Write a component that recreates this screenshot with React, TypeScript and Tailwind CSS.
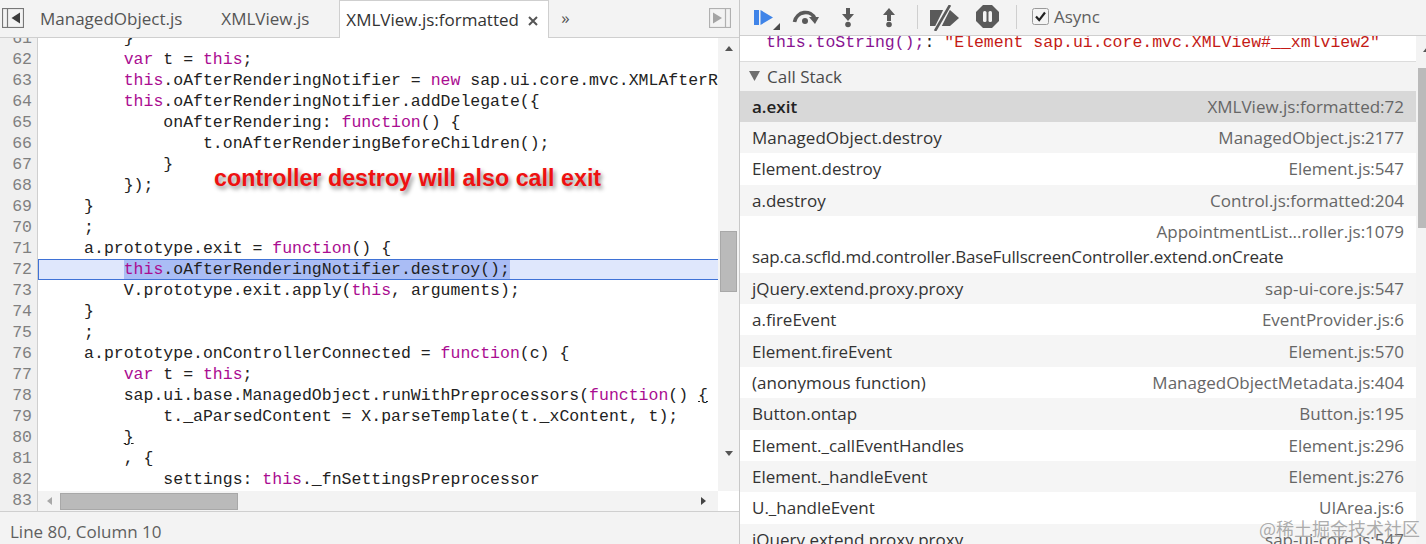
import type { ReactNode } from "react";

const UI_FONT = "font-['Open_Sans','Noto_Sans',sans-serif]";

const Kw = ({ children }: { children: ReactNode }) => <span className="text-[#aa0d91]">{children}</span>;

// colours this / var / new / function, leaves the rest alone
const hl = (src: string) =>
  src.split(/\b(this|var|new|function)\b/).map((part, i) => (i % 2 ? <Kw key={i}>{part}</Kw> : part));

const codeLines: { n: number; indent: number; body: ReactNode; active?: boolean }[] = [
  { n: 61, indent: 8, body: "}" },
  { n: 62, indent: 8, body: hl("var t = this;") },
  { n: 63, indent: 8, body: hl("this.oAfterRenderingNotifier = new sap.ui.core.mvc.XMLAfterRenderingNotifier();") },
  { n: 64, indent: 8, body: hl("this.oAfterRenderingNotifier.addDelegate({") },
  { n: 65, indent: 12, body: hl("onAfterRendering: function() {") },
  { n: 66, indent: 16, body: "t.onAfterRenderingBeforeChildren();" },
  { n: 67, indent: 12, body: "}" },
  { n: 68, indent: 8, body: "});" },
  { n: 69, indent: 4, body: "}" },
  { n: 70, indent: 4, body: ";" },
  { n: 71, indent: 4, body: hl("a.prototype.exit = function() {") },
  {
    n: 72,
    indent: 8,
    active: true,
    body: <span className="bg-[#aabdf5]">{hl("this.oAfterRenderingNotifier.destroy();")}</span>,
  },
  { n: 73, indent: 8, body: hl("V.prototype.exit.apply(this, arguments);") },
  { n: 74, indent: 4, body: "}" },
  { n: 75, indent: 4, body: ";" },
  { n: 76, indent: 4, body: hl("a.prototype.onControllerConnected = function(c) {") },
  { n: 77, indent: 8, body: hl("var t = this;") },
  {
    n: 78,
    indent: 8,
    body: (
      <>
        {hl("sap.ui.base.ManagedObject.runWithPreprocessors(function() ")}
        <span className="underline">{"{"}</span>
      </>
    ),
  },
  { n: 79, indent: 12, body: "t._aParsedContent = X.parseTemplate(t._xContent, t);" },
  { n: 80, indent: 8, body: <span className="underline">{"}"}</span> },
  { n: 81, indent: 8, body: ", {" },
  { n: 82, indent: 12, body: hl("settings: this._fnSettingsPreprocessor") },
  { n: 83, indent: 8, body: "}" },
];

const stack: { name: string; file: string; tall?: boolean }[] = [
  { name: "a.exit", file: "XMLView.js:formatted:72" },
  { name: "ManagedObject.destroy", file: "ManagedObject.js:2177" },
  { name: "Element.destroy", file: "Element.js:547" },
  { name: "a.destroy", file: "Control.js:formatted:204" },
  {
    name: "sap.ca.scfld.md.controller.BaseFullscreenController.extend.onCreate",
    file: "AppointmentList...roller.js:1079",
    tall: true,
  },
  { name: "jQuery.extend.proxy.proxy", file: "sap-ui-core.js:547" },
  { name: "a.fireEvent", file: "EventProvider.js:6" },
  { name: "Element.fireEvent", file: "Element.js:570" },
  { name: "(anonymous function)", file: "ManagedObjectMetadata.js:404" },
  { name: "Button.ontap", file: "Button.js:195" },
  { name: "Element._callEventHandles", file: "Element.js:296" },
  { name: "Element._handleEvent", file: "Element.js:276" },
  { name: "U._handleEvent", file: "UIArea.js:6" },
  { name: "jQuery.extend.proxy.proxy", file: "sap-ui-core.js:547" },
];

const PanelToggle = ({ flip }: { flip?: boolean }) => (
  <svg width="22" height="20" viewBox="0 0 22 20" className="shrink-0">
    <rect x="0.5" y="0.5" width="21" height="19" fill="#f3f3f3" stroke={flip ? "#b0b0b0" : "#777"} strokeWidth="1.2" />
    {flip ? (
      <>
        <path d="M16.5 1v18" stroke="#b0b0b0" strokeWidth="1.2" />
        <path d="M4 4.5l9 5.5-9 5.5z" fill="#a4a4a4" />
      </>
    ) : (
      <>
        <path d="M5.5 1v18" stroke="#777" strokeWidth="1.2" />
        <path d="M18 4.5L9.5 10l8.5 5.5z" fill="#3c3c3c" />
      </>
    )}
  </svg>
);

const DebugToolbar = () => (
  <div className="h-[36px] shrink-0 flex items-start bg-[#f3f3f3] border-b border-[#cfcfcf]">
    <svg width="28" height="22" viewBox="0 0 28 22" className="ml-[13px] mt-[9px] shrink-0">
      <path d="M1 1h5v15H1zM7.5 1L20 8.5 7.5 16z" fill="#3f84e8" />
      <path d="M27 14v7h-7z" fill="#4a4a4a" />
    </svg>
    <svg width="28" height="18" viewBox="0 0 28 18" className="ml-[11px] mt-[8px] shrink-0">
      <path d="M2.5 14C4.5 3 19 1 23 11" fill="none" stroke="#5a5a5a" strokeWidth="3.6" />
      <path d="M17 9l10 0-4 7z" fill="#5a5a5a" />
      <circle cx="13" cy="13" r="3" fill="#5a5a5a" />
    </svg>
    <svg width="14" height="20" viewBox="0 0 14 20" className="ml-[21px] mt-[8px] shrink-0">
      <path d="M5 0h4v6h4l-6 7-6-7h4z" fill="#5a5a5a" />
      <circle cx="7" cy="16.5" r="2.8" fill="#5a5a5a" />
    </svg>
    <svg width="14" height="20" viewBox="0 0 14 20" className="ml-[27px] mt-[8px] shrink-0">
      <path d="M5 13h4V7h4L7 0 1 7h4z" fill="#5a5a5a" />
      <circle cx="7" cy="16.5" r="2.8" fill="#5a5a5a" />
    </svg>
    <div className="ml-[21px] mt-[5px] w-px h-[24px] bg-[#cfcfcf] shrink-0" />
    <svg width="29" height="26" viewBox="0 0 29 26" className="ml-[12px] mt-[5px] shrink-0">
      <path d="M0 5h20l9 8-9 8H0z" fill="#5a5a5a" />
      <path d="M19 0L6 26" stroke="#f3f3f3" strokeWidth="6" />
      <path d="M20 0L5 26" stroke="#5a5a5a" strokeWidth="2.6" />
    </svg>
    <svg width="23" height="23" viewBox="0 0 23 23" className="ml-[17px] mt-[5px] shrink-0">
      <path d="M7 0h9l7 7v9l-7 7H7l-7-7V7z" fill="#5a5a5a" />
      <rect x="7" y="6" width="3.5" height="11" rx="1.5" fill="#f3f3f3" />
      <rect x="12.5" y="6" width="3.5" height="11" rx="1.5" fill="#f3f3f3" />
    </svg>
    <div className="ml-[17px] mt-[5px] w-px h-[24px] bg-[#cfcfcf] shrink-0" />
    <svg width="17" height="17" viewBox="0 0 17 17" className="ml-[15px] mt-[8px] shrink-0">
      <rect x="0.5" y="0.5" width="16" height="16" rx="2" fill="#f4f4f4" stroke="#9a9a9a" />
      <path d="M4 8.5l3.2 3.6L13 4.5" fill="none" stroke="#222" strokeWidth="2.2" />
    </svg>
    <span className="ml-[5px] mt-[5px] text-[17px] leading-[24px] text-[#5f5f5f]">Async</span>
  </div>
);

export default function App() {
  return (
    <div className={`relative w-[1426px] h-[544px] overflow-hidden flex bg-white ${UI_FONT}`}>
      {/* source panel */}
      <div className="w-[740px] h-full shrink-0 flex flex-col border-r border-[#c8c8c8]">
        <div className="h-[38px] shrink-0 flex items-start bg-[#f3f3f3] border-b border-[#cfcfcf] text-[17px] text-[#555]">
          <div className="ml-[2px] mt-[8px]">
            <PanelToggle />
          </div>
          <span className="ml-[16px] mt-[6px] leading-[26px]">ManagedObject.js</span>
          <span className="ml-[39px] mt-[6px] leading-[26px]">XMLView.js</span>
          <div className="ml-[30px] w-[210px] h-[38px] flex items-start bg-white border border-b-0 border-[#cfcfcf] text-[#333]">
            <span className="ml-[6px] mt-[6px] leading-[26px]">XMLView.js:formatted</span>
            <svg width="10" height="10" viewBox="0 0 10 10" className="ml-[9px] mt-[15px] shrink-0">
              <path d="M1 1l8 8M9 1L1 9" stroke="#555" strokeWidth="2" />
            </svg>
          </div>
          <span className="ml-[12px] mt-[5px] leading-[26px]">»</span>
          <div className="ml-auto mr-[8px] mt-[8px]">
            <PanelToggle flip />
          </div>
        </div>

        <div className="relative flex-1 min-h-0 flex overflow-hidden">
          <div className="w-[38px] shrink-0 bg-[#f0f0f0] border-r border-[#cfcfcf] overflow-hidden">
            <div className="-mt-[10px] font-['Liberation_Mono',monospace] text-[16.5px] leading-[21px] text-[#808080] text-right pr-[5px]">
              {codeLines.map((l) => (
                <div key={l.n} className="h-[21px]">
                  {l.n}
                </div>
              ))}
            </div>
          </div>

          <div className="flex-1 min-w-0 flex flex-col">
            <div className="flex-1 min-h-0 overflow-hidden">
              <div className="-mt-[10px] font-['Liberation_Mono',monospace] text-[16.5px] leading-[21px] text-[#222]">
                {codeLines.map((l) => (
                  <div
                    key={l.n}
                    className={
                      l.active
                        ? "h-[21px] pl-[6.5px] whitespace-pre bg-[#dfe7fc] shadow-[inset_0_1px_0_#3f72d6,inset_0_-1px_0_#3f72d6,inset_1px_0_0_#3f72d6]"
                        : "h-[21px] pl-[6.5px] whitespace-pre"
                    }
                  >
                    {" ".repeat(l.indent)}
                    {l.body}
                  </div>
                ))}
              </div>
            </div>
            <div className="h-[20px] shrink-0 flex items-center bg-[#f3f3f3]">
              <svg width="6" height="8" viewBox="0 0 6 8" className="ml-[9px] shrink-0">
                <path d="M5 0v8L0 4z" fill="#a8a8a8" />
              </svg>
              <div className="ml-[7px] w-[178px] h-[17px] bg-[#bababa] border border-[#a8a8a8]" />
              <svg width="6" height="8" viewBox="0 0 6 8" className="ml-auto mr-[11px] shrink-0">
                <path d="M0 0v8l5-4z" fill="#444" />
              </svg>
            </div>
          </div>

          <div className="w-[21px] shrink-0 flex flex-col items-center bg-[#f3f3f3]">
            <svg width="8" height="6" viewBox="0 0 8 6" className="mt-[8px] shrink-0">
              <path d="M0 5h8L4 0z" fill="#555" />
            </svg>
            <div className="mt-[179px] w-[17px] h-[61px] bg-[#bababa] border border-[#a8a8a8]" />
            <svg width="8" height="6" viewBox="0 0 8 6" className="mt-[159px] shrink-0">
              <path d="M0 0h8L4 5z" fill="#555" />
            </svg>
            <div className="mt-auto h-[20px] w-full bg-white" />
          </div>

          <div className="absolute left-[214px] top-[125px] font-['Liberation_Sans',sans-serif] font-bold text-[23.3px] leading-[30px] text-[#ee1111] whitespace-nowrap [text-shadow:2px_3px_4px_rgba(0,0,0,0.45)]">
            controller destroy will also call exit
          </div>
        </div>

        <div className="h-[33px] shrink-0 flex items-center pl-[10px] pt-[7px] bg-[#f3f3f3] border-t border-[#cfcfcf] text-[17px] text-[#5f5f5f]">
          Line 80, Column 10
        </div>
      </div>

      {/* debugger sidebar */}
      <div className="flex-1 min-w-0 h-full flex flex-col">
        <DebugToolbar />
        <div className="flex-1 min-h-0 flex overflow-hidden">
          <div className="flex-1 min-w-0">
            <div className="h-[26px] overflow-hidden border-b border-[#dcdcdc] pl-[26px]">
              <div className="-mt-[4px] font-['Liberation_Mono',monospace] text-[16.5px] leading-[21px] whitespace-pre">
                <span className="text-[#881391]">this.toString();</span>
                <span className="text-[#222]">: </span>
                <span className="text-[#c41a16]">"Element sap.ui.core.mvc.XMLView#__xmlview2"</span>
              </div>
            </div>
            <div className="h-[28.5px] flex items-center bg-[#f3f3f3] text-[17px] text-[#4a4a4a]">
              <svg width="12" height="10" viewBox="0 0 12 10" className="ml-[9px] mr-[6px] shrink-0">
                <path d="M0 0h11L5.5 10z" fill="#6e6e6e" />
              </svg>
              Call Stack
            </div>
            {stack.map((row, i) => (
              <div
                key={i}
                className={`${row.tall ? "h-[56.5px] pt-[3px]" : "h-[31.4px] items-center"} ${
                  i === 0 ? "bg-[#d8d8d8]" : i % 2 ? "bg-[#f5f5f5]" : "bg-white"
                } flex ${row.tall ? "flex-col" : "justify-between"} px-[12px] text-[17px] leading-[25px]`}
              >
                {row.tall ? (
                  <>
                    <span className="self-end text-[#666]">{row.file}</span>
                    <span className="text-[#333] whitespace-nowrap tracking-[-0.17px]">{row.name}</span>
                  </>
                ) : (
                  <>
                    <span className={i === 0 ? "text-[#222] font-semibold" : "text-[#333]"}>{row.name}</span>
                    <span className="text-[#666]">{row.file}</span>
                  </>
                )}
              </div>
            ))}
          </div>
          <div className="w-[10px] shrink-0 bg-[#f3f3f3] flex flex-col">
            <svg width="8" height="6" viewBox="0 0 8 6" className="mt-[11px] ml-[7px] shrink-0">
              <path d="M0 5h8L4 0z" fill="#555" />
            </svg>
            <div className="mt-[15px] ml-[2px] w-[8px] h-[160px] bg-[#bababa]" />
          </div>
        </div>
      </div>

      <div className="absolute right-[6px] bottom-[5px] font-['Noto_Sans_CJK_SC',sans-serif] text-[18px] leading-[22px] text-[#8a8a8a]/70 whitespace-nowrap">
        @稀土掘金技术社区
      </div>
    </div>
  );
}
